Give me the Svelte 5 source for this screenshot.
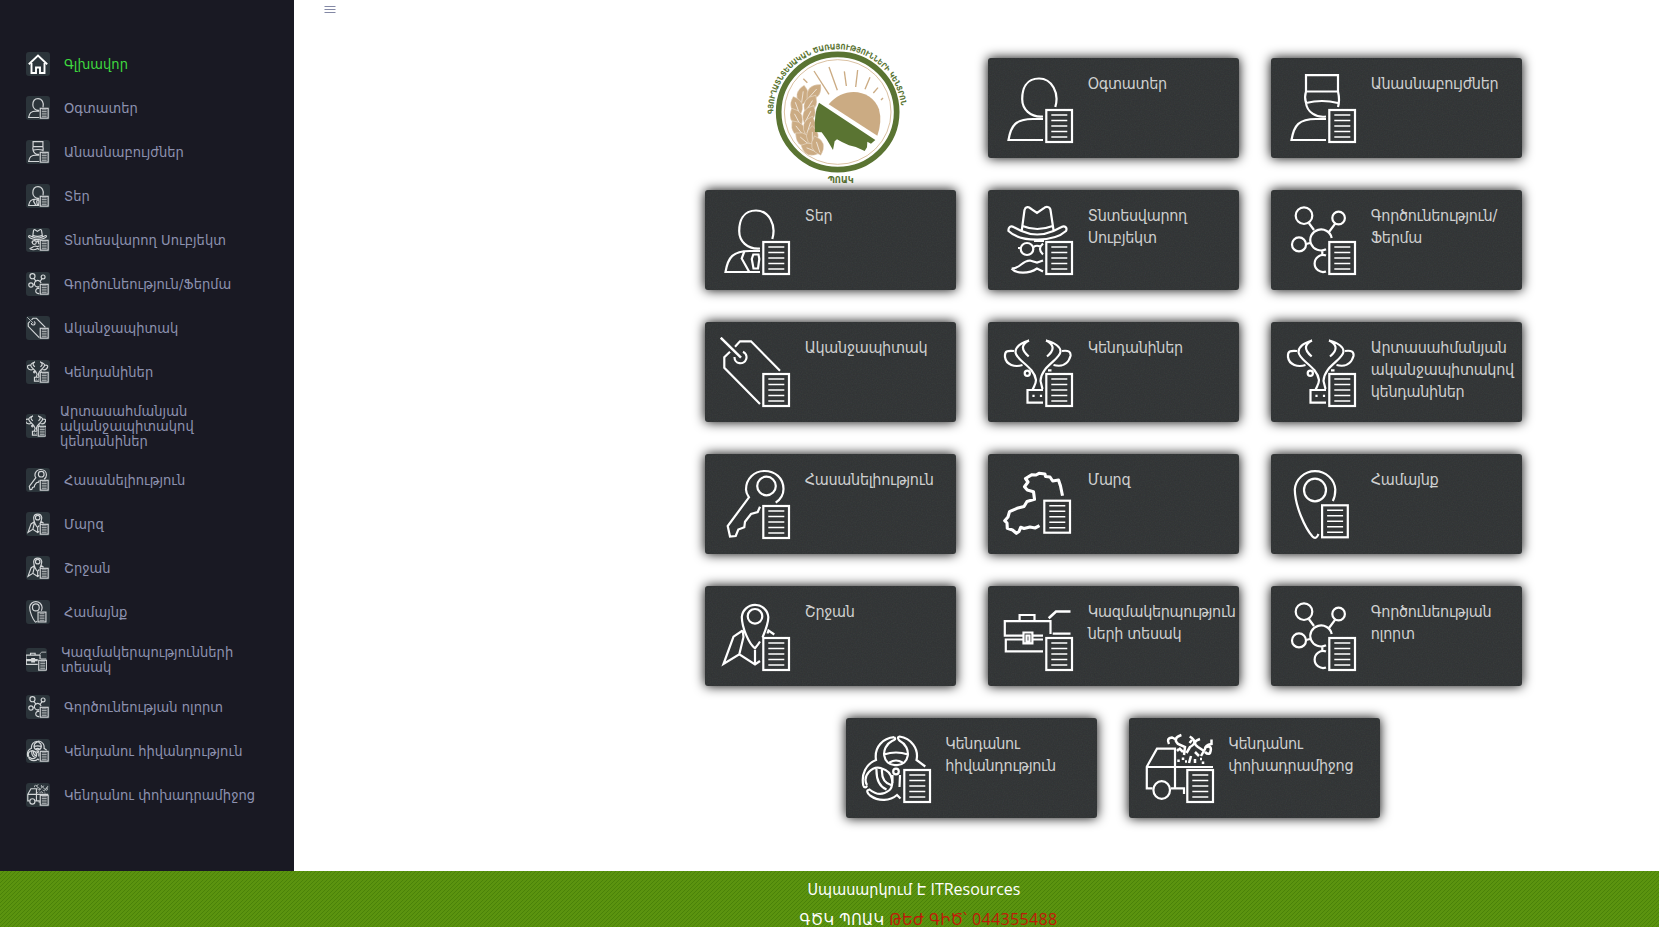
<script>
  const person = '<path d="M67.3 49C71.5 35 64 20.5 51 20.5S34.2 31 34.2 41 42 59.5 55 58.5M55 61H45C28 61 23 67 20.500 82H55"/>';
  const cow =
    '<path d="M41 18.500C33 21 27.500 25 27.500 30 28 39 46 44 48 58 48 62 46 64 44.500 68M41 18.500C34 22 32 27 40.700 34.500M26 29C19 28.500 16.500 29 17 35 18 43 27 45.500 34.500 43M58 18.500C67 21 72.500 25 72.500 29.500 72 38 53 44 52.500 59L54.500 67M58 18.500C65 22 68 27 59 34.500M74 29C81 28 83 30 82.500 34 80 43 73 45 65.500 43M55 68H39.500V80.700H55M60 48.300H63.500"/><circle cx="39.300" cy="51.300" r="2.600"/><path d="M45.500 72.700V75M53 72.700V75"/>';
  const network =
    '<circle cx="33" cy="25.700" r="8.300"/><circle cx="67.600" cy="28" r="6.300"/><circle cx="28" cy="54.400" r="7"/><path d="M60.700 48A10.800 10.500 0 1 0 55 59.300M55 65.500A8.500 8.500 0 1 0 55 81.500M37.800 33 43 40M64.400 33.300 58 42M35.300 54 39.600 52.700M51.300 60V65"/>';

  const icons = {
    user: { art: person },
    vet: {
      art: '<path d="M35 17.200H67V33.500H35ZM35 33.500C33.500 38 34 42 35 45 36 54 45 60 55 58.500M35 45Q51 41 67 45M67 33.500Q69 42 67 49M55 61H45C28 61 23 67 20.500 82H55"/>',
    },
    owner: {
      art: person + '<path d="M39.500 61 36.700 68.500 44 81.500M48.300 64.500H53.500L54.300 69 53 78.500H48.500L46.800 69Z"/>',
    },
    subject: {
      art: '<path d="M33.800 40 36.500 20C37.500 16.500 41 16.500 42.500 18.500L49 23 55.500 18.500C58 16 62 16.500 62.500 20L65.500 40M34.500 36Q49 42 64.700 36M33.500 41Q49 48 65.500 41L73.500 37C77 35 79.500 38 78 41 66 52 33 53 20.500 41 20 37 23 35.500 25.500 37L33.500 41M46 51H56M30 58H33M45.500 57Q49 54.500 52.500 57M55 53.500Q49 59 55 64.500M23.600 78.500C33 78.500 33 71 42 70.500L49 72.500 55 70.500M23.600 78.500C28 84 41 84 49 78.500L55 81.500"/><ellipse cx="39" cy="59" rx="6.300" ry="6"/>',
    },
    network: { art: network },
    tag: {
      art: '<path stroke-width="2.500" d="M15.700 15.700 36 35.700"/><path d="M30 24.700 35 19.300H46L75 48.700M25 29.700 19.300 35.300V45.700L55 82M38 29.800A6 6 0 1 1 29.500 35"/>',
    },
    cow: { art: cow },
    key: {
      art: '<circle cx="61.500" cy="32" r="9.300"/><path d="M70.700 48.700C76 45 78.500 40 78.500 35 78.500 24 70 17 59.500 17S41 25 41 35.500C41 39 42.500 41 44 43.300L22.700 72 25 82.500 30.700 82 33.300 75.500 39.300 73.300 40 67.700 46 60 52.700 58 55 52.700"/>',
    },
    region: {
      dx: -2, dy: -5.3,
      art: '<path stroke-width="3.100" stroke-linejoin="round" d="M74.500 41.700 72.500 32 70.500 26 64.700 27 62 23 57.500 22.500 57 20 51 19.300 48 21 44 20.700 37.500 24.500 40 28 36.500 32.700 39.300 36 45.500 37.700 46.500 45.300 39 47.500 36 52.500 29 54.300 21.500 57.700 20 63 16.700 66.700 19 69 19.300 74.300 24.500 76 28.400 79.300 31 77.500 32.700 73.300 36 74.500 42 73 47 74 51.500 71.700"/>',
    },
    pin: {
      dx: -7.2, dy: -0.7,
      art: '<ellipse cx="44" cy="36" rx="11" ry="11.300"/><path d="M61.800 47C64 43 64.300 39 64.300 35.500A20.300 19.700 0 0 0 23.800 35.500C24 52 34 74 41.500 82.500Q44.300 85.500 46.500 82L47.500 80"/>',
    },
    map: {
      art: '<circle cx="50" cy="30.300" r="7.300"/><path d="M57.500 51.500C61 43 63.500 37 63.300 31A13.300 13.300 0 0 0 36.800 31C37 42 44 58 50 62.300 52 60 53.500 58 55 55.500M37.700 44.500 28.500 50.700 18.500 78 34.300 68.300 50 78.500 55 75M37.700 44.500 38.500 51 34.300 68.300M50 64V78.500M62.500 47.500 63.500 44.500 69.300 48.500"/>',
    },
    business: {
      art: '<path d="M62.500 48V35.200H16.800V49.700H35M44.500 49.700H55M31.600 35V29H46.500V35M35 53.500H17.800V65.300H55M44.500 53.500H55M35.500 46.500H44.400V57.300H35.500ZM38.500 49.500H41.500V55.500H38.500ZM64.700 47.700H82.500"/><path stroke-width="2.600" d="M60.700 32.300 68 25.500H82.500"/>',
    },
    disease: {
      art: '<path d="M48.400 19.200C37 20 28 29 30 42 20 46 15 56 17.300 67.500 18 70 20.500 70 21 67.500M48.400 19.200C50 21 49 22 46 23 34 29 36 48 50 47 64 48 66 29 54 23 52 21.500 51 19 53.500 18.500 65 20 73 31 70.500 42L79.300 48.500M38 36.500Q50 32.500 62 36.500M43.500 44.500Q50 40.500 56.500 44.500M21 67C16 58 26 47 36 50.500 48 54 48 68 43 72.500 36 78 29 76 23.500 71.500 20 72 21 75 24 77.500 33 84 44 83 51 77L54.500 80.500M30.500 51Q30 67 40.500 71.500M36 51Q35 64 45 67M46.500 57V65M54 57 53.500 69"/><circle cx="50" cy="53.500" r="2.800"/>',
    },
    truck: {
      art: '<path d="M23.600 70.300H17.800V48.700L28 30.600H46V70.300M17.800 49H84M41.800 70.300H55V76"/><ellipse cx="32.700" cy="72" rx="8.300" ry="8.800"/><path stroke-width="2.500" d="M40 26Q37 20 43 19.500L48 22M52.400 17Q43 20 49 26L56 29 55 37M60.700 18.500Q70 24 61 29L57.500 35M60.500 25 63 22M50 30 54 34M48 33 50 31M71 21Q62 24 69 29L75 33M82.500 21.500V26Q76 27 76 31L72 38M77 29Q84 27 81 35 79 37 76 34M62 38 60 45M66 34 70 38M71 41H73M49.500 41.500V44M54 39.500V42M56 43.500H58M66 41V45M74 43.500V46"/>',
    },
  };

  const nav = [
    { icon: 'home', label: ['Գլխավոր'] },
    { icon: 'user', label: ['Օգտատեր'] },
    { icon: 'vet', label: ['Անասնաբույժներ'] },
    { icon: 'owner', label: ['Տեր'] },
    { icon: 'subject', label: ['Տնտեսվարող Սուբյեկտ'] },
    { icon: 'network', label: ['Գործունեություն/Ֆերմա'] },
    { icon: 'tag', label: ['Ականջապիտակ'] },
    { icon: 'cow', label: ['Կենդանիներ'] },
    { icon: 'cow', label: ['Արտասահմանյան', 'ականջապիտակով', 'կենդանիներ'] },
    { icon: 'key', label: ['Հասանելիություն'] },
    { icon: 'map', label: ['Մարզ'] },
    { icon: 'map', label: ['Շրջան'] },
    { icon: 'pin', label: ['Համայնք'] },
    { icon: 'business', label: ['Կազմակերպությունների', 'տեսակ'] },
    { icon: 'network', label: ['Գործունեության ոլորտ'] },
    { icon: 'disease', label: ['Կենդանու հիվանդություն'] },
    { icon: 'truck', label: ['Կենդանու փոխադրամիջոց'] },
  ];

  const rows = [
    [
      { logo: true },
      { icon: 'user', label: ['Օգտատեր'] },
      { icon: 'vet', label: ['Անասնաբույժներ'] },
    ],
    [
      { icon: 'owner', label: ['Տեր'] },
      { icon: 'subject', label: ['Տնտեսվարող', 'Սուբյեկտ'] },
      { icon: 'network', label: ['Գործունեություն/', 'Ֆերմա'] },
    ],
    [
      { icon: 'tag', label: ['Ականջապիտակ'] },
      { icon: 'cow', label: ['Կենդանիներ'] },
      { icon: 'cow', label: ['Արտասահմանյան', 'ականջապիտակով', 'կենդանիներ'] },
    ],
    [
      { icon: 'key', label: ['Հասանելիություն'] },
      { icon: 'region', label: ['Մարզ'] },
      { icon: 'pin', label: ['Համայնք'] },
    ],
    [
      { icon: 'map', label: ['Շրջան'] },
      { icon: 'business', label: ['Կազմակերպություն', 'ների տեսակ'] },
      { icon: 'network', label: ['Գործունեության', 'ոլորտ'] },
    ],
    [
      { icon: 'disease', label: ['Կենդանու', 'հիվանդություն'] },
      { icon: 'truck', label: ['Կենդանու', 'փոխադրամիջոց'] },
    ],
  ];

  const rays = [
    [163, 146, 175, 158], [195, 123, 240, 193], [240, 111, 265, 181], [286, 124, 292, 168],
    [326, 120, 320, 171], [363, 142, 348, 178], [387, 173, 373, 189], [402, 204, 396, 210],
  ];
  const leaves = [
    [161, 196, 8], [195, 186, 42], [143, 228, -20], [184, 222, 32], [142, 262, -28], [180, 254, 28],
    [148, 297, -38], [181, 288, 18], [163, 329, -50], [190, 318, 0], [184, 358, -68], [206, 347, -18],
  ];
</script>

{#snippet glyph(name)}
  {@const icon = icons[name]}
  {@html icon.art}
  <g transform="translate({icon.dx ?? 0} {icon.dy ?? 0})">
    <rect x="58.300" y="52" width="25.700" height="32" />
    <path class="rule" d="M63.300 57H79.300M63.300 62.500H79.300M63.300 68H79.300M63.300 73.500H79.300M63.300 79H79.300" />
  </g>
{/snippet}

{#snippet emblem()}
  <svg class="logo" viewBox="48 30 432 435">
    <path id="ring" fill="none" d="M73 252A191 187 0 0 1 457 240" />
    <text class="ring-text"><textPath href="#ring" textLength="584" lengthAdjust="spacingAndGlyphs">ԳՅՈՒՂԱՏՆՏԵՍԱԿԱՆ ԾԱՌԱՅՈՒԹՅՈՒՆՆԵՐԻ ԿԵՆՏՐՈՆ</textPath></text>
    <text class="ring-base" x="236" y="458" textLength="78" lengthAdjust="spacingAndGlyphs">ՊՈԱԿ</text>
    <ellipse cx="266" cy="246" rx="177" ry="173" fill="#fff" stroke="#5a7432" stroke-width="17" />
    <ellipse cx="266" cy="246" rx="160" ry="157" fill="none" stroke="#d3b48f" stroke-width="2.500" />
    {#each rays as [x1, y1, x2, y2]}
      <line {x1} {y1} {x2} {y2} stroke="#cbab83" stroke-width="4" />
    {/each}
    <path fill="#cbab83" d="M239 223C285 165 370 178 390 238Q400 275 385 317Z" />
    {#each leaves as [x, y, angle]}
      <g transform="translate({x} {y}) rotate({angle})">
        <path fill="#cbab83" stroke="#fff" stroke-width="1" d="M0-31Q36 0 0 31Q-36 0 0-31Z" />
        <path stroke="#fff" stroke-width="1.800" d="M0-12V22" />
      </g>
    {/each}
    <path fill="#5a7432" d="M210 218 379 330 366 341 355 335 354 352 347 363Q325 350 300 346 280 338 264 328L257 334 252 360 233 328 218 307 198 306Q194 250 210 218Z" />
  </svg>
{/snippet}

<div class="page">
  <div class="body">
    <nav>
      {#each nav as item, i}
        <a href="#{i}" class:active={i === 0} class:two={item.label.length === 2} class:three={item.label.length === 3}>
          {#if item.icon === 'home'}
            <svg class="badge home" viewBox="0 0 24 24">
              <path d="M5.500 11V21H10V15.500H14V21H18.500V11" />
              <path d="M2.800 12.300 12 3.500 21.200 12.300" />
            </svg>
          {:else}
            <svg class="badge" viewBox="12 12 78 78" preserveAspectRatio="xMidYMid slice">{@render glyph(item.icon)}</svg>
          {/if}
          <span>{#each item.label as line, n}{#if n}<br />{/if}{line}{/each}</span>
        </a>
      {/each}
    </nav>
    <main>
      <header>
        <svg width="12" height="8" viewBox="0 0 12 8"><path d="M.5 .5H11.500M.5 3.500H11.500M.5 6.500H11.500" /></svg>
      </header>
      <div class="grid">
        {#each rows as row}
          <div class="row">
            {#each row as card}
              {#if card.logo}
                <div class="brand">{@render emblem()}</div>
              {:else}
                <div class="card">
                  <svg viewBox="15 15 72 72">{@render glyph(card.icon)}</svg>
                  <p>{#each card.label as line, n}{#if n}<br />{/if}{line}{/each}</p>
                </div>
              {/if}
            {/each}
          </div>
        {/each}
      </div>
    </main>
  </div>
  <footer>
    <p>Սպասարկում Է <span class="latin">ITResources</span></p>
    <p class="second">ԳԾԿ ՊՈԱԿ <em>ԹԵԺ ԳԻԾ՝ <span class="latin">044355488</span></em></p>
  </footer>
</div>

<style>
  :global(body) {
    background: #fff;
    overflow: hidden;
  }
  .page {
    height: 927px;
    overflow: hidden;
    display: flex;
    flex-direction: column;
    font-family: "DejaVu Sans Condensed", "DejaVu Sans", sans-serif;
    font-stretch: condensed;
  }
  .body {
    display: flex;
    height: 871px;
    flex: none;
  }
  nav {
    width: 294px;
    box-sizing: border-box;
    padding: 42px 0 0 26px;
    background: #191923;
    flex: none;
  }
  nav a {
    height: 44px;
    display: flex;
    align-items: center;
    gap: 14px;
    color: #8d92b0;
    font-size: 14.500px;
    line-height: 15px;
    letter-spacing: .04px;
    text-decoration: none;
    white-space: nowrap;
  }
  nav a.active {
    color: #3fd93f;
  }
  nav a.two {
    height: 51px;
  }
  nav a.three {
    height: 64px;
  }
  .badge {
    width: 24px;
    height: 24px;
    flex: none;
    border-radius: 3px;
    background: #2b343a;
    fill: none;
    stroke: #d3d6d8;
    stroke-width: 3.800;
  }
  .badge :global(.rule) {
    stroke-width: 2.400;
  }
  .two .badge {
    width: 21px;
  }
  .three .badge {
    width: 20px;
  }
  .badge.home {
    stroke: #fff;
    stroke-width: 1.900;
  }
  main {
    flex: 1;
  }
  header {
    height: 42px;
    padding: 6px 0 0 30px;
    box-sizing: border-box;
  }
  header svg {
    display: block;
    stroke: #8388a5;
    stroke-width: 1;
  }
  .grid {
    width: 817px;
    margin-left: 411px;
    padding-top: 16px;
    display: flex;
    flex-direction: column;
    gap: 32px;
  }
  .row {
    height: 100px;
    display: flex;
    justify-content: center;
    gap: 32px;
  }
  .row:last-child {
    padding-right: 2px;
  }
  .brand {
    width: 251px;
    box-sizing: border-box;
    padding-left: 60px;
  }
  .logo {
    display: block;
    width: 144px;
    height: 145px;
    margin-top: -18px;
  }
  .ring-text,
  .ring-base {
    font-size: 23px;
    font-weight: 700;
    fill: #5a7432;
  }
  .ring-base {
    font-size: 26px;
  }
  .card {
    width: 251px;
    height: 100px;
    box-sizing: border-box;
    padding: 15px 0 0 15px;
    display: flex;
    gap: 12.800px;
    border-radius: 3px;
    background-color: #2e3132;
    background-image: url("data:image/svg+xml,%3Csvg xmlns='http://www.w3.org/2000/svg' width='100' height='100'%3E%3Cfilter id='n'%3E%3CfeTurbulence type='fractalNoise' baseFrequency='.8' numOctaves='2' stitchTiles='stitch'/%3E%3C/filter%3E%3Crect width='100' height='100' filter='url(%23n)' opacity='.07'/%3E%3C/svg%3E");
    box-shadow: 0 0 12px #000;
  }
  .card svg {
    width: 72px;
    height: 72px;
    flex: none;
    fill: none;
    stroke: #fff;
    stroke-width: 2.200;
  }
  .card :global(.rule) {
    stroke-width: 1.500;
  }
  .card p {
    margin: 0;
    color: #cfd0d0;
    font-size: 16px;
    line-height: 22px;
    letter-spacing: -.3px;
    white-space: nowrap;
  }
  footer {
    height: 56px;
    padding-top: 4px;
    box-sizing: border-box;
    background: #5b930f url("data:image/svg+xml,%3Csvg xmlns='http://www.w3.org/2000/svg' width='4' height='4' shape-rendering='crispEdges' fill='%234a8209'%3E%3Cpath d='M3 0h1v1H3zM2 1h1v1H2zM1 2h1v1H1zM0 3h1v1H0z'/%3E%3C/svg%3E");
    color: #fff;
    font-size: 16px;
  }
  footer p {
    margin: 0;
    padding-left: 169px;
    line-height: 30px;
    text-align: center;
    white-space: nowrap;
  }
  footer .second {
    padding-left: 198px;
    letter-spacing: .35px;
  }
  .latin {
    font-family: "Open Sans", sans-serif;
    font-stretch: normal;
    line-height: 1;
  }
  footer em {
    font-style: normal;
    color: #c01a0a;
  }
</style>
